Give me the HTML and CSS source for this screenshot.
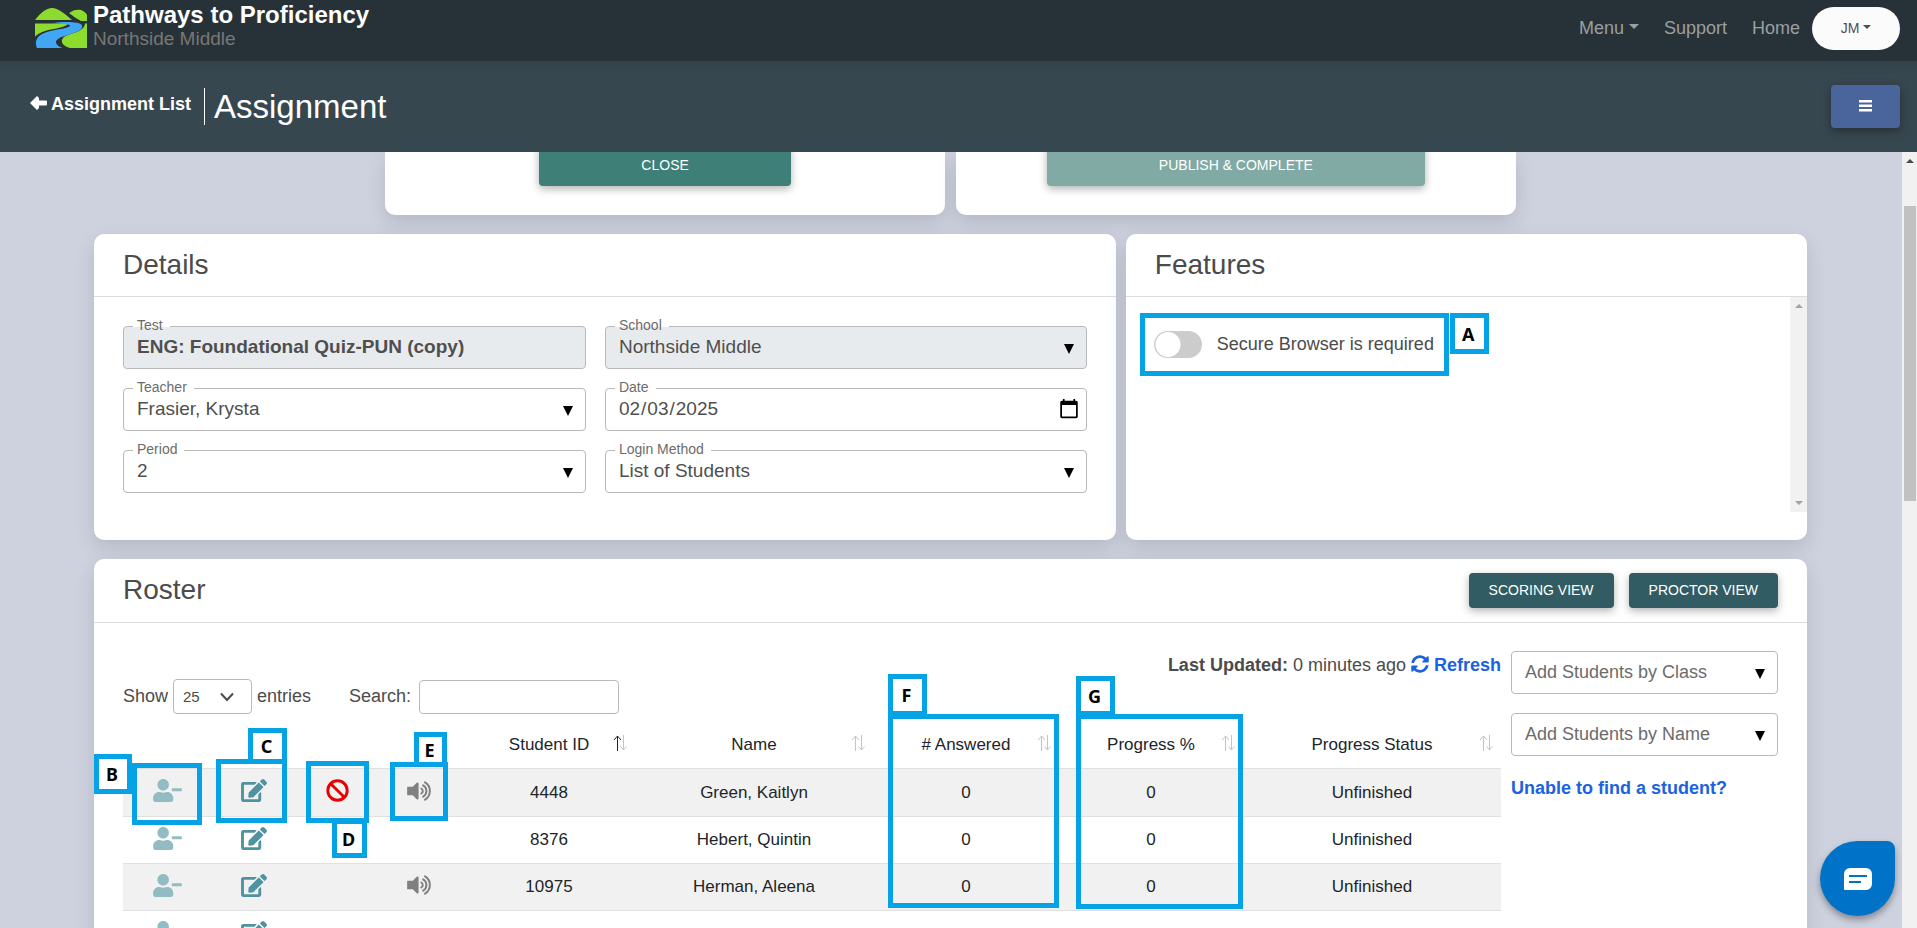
FILE: index.html
```html
<!DOCTYPE html>
<html lang="en">
<head>
<meta charset="utf-8">
<title>Assignment - Pathways to Proficiency</title>
<link rel="stylesheet" href="styles.css">
</head>
<body>
<svg class="sprite" aria-hidden="true">
  <symbol id="user-minus" viewBox="0 0 640 512"><path d="M624 208H432c-8.800 0-16 7.200-16 16v32c0 8.800 7.200 16 16 16h192c8.800 0 16-7.200 16-16v-32c0-8.800-7.200-16-16-16zm-400 48c70.700 0 128-57.300 128-128S294.700 0 224 0 96 57.300 96 128s57.300 128 128 128zm89.600 32h-16.700c-22.200 10.200-46.900 16-72.900 16s-50.600-5.800-72.900-16h-16.700C60.200 288 0 348.200 0 422.400V464c0 26.500 21.500 48 48 48h352c26.500 0 48-21.500 48-48v-41.600c0-74.200-60.200-134.400-134.400-134.400z"/></symbol>
  <symbol id="edit" viewBox="0 0 576 512"><path d="M402.600 83.200l90.200 90.200c3.800 3.800 3.800 10 0 13.800L274.400 405.600l-92.800 10.300c-12.400 1.400-22.900-9.100-21.500-21.500l10.300-92.800L388.800 83.200c3.800-3.800 10-3.800 13.800 0zm162-22.900l-48.800-48.800c-15.200-15.200-39.900-15.200-55.200 0l-35.400 35.400c-3.800 3.800-3.800 10 0 13.800l90.200 90.200c3.800 3.800 10 3.800 13.800 0l35.400-35.400c15.200-15.300 15.200-40 0-55.200zM384 346.200V448H64V128h229.800c3.200 0 6.200-1.300 8.500-3.500l40-40c7.600-7.600 2.200-20.500-8.500-20.500H48C21.500 64 0 85.500 0 112v352c0 26.500 21.500 48 48 48h352c26.500 0 48-21.500 48-48V306.200c0-10.700-12.900-16-20.500-8.500l-40 40c-2.200 2.300-3.500 5.300-3.500 8.500z"/></symbol>
  <symbol id="ban" viewBox="0 0 512 512"><g fill="none" stroke="currentColor" stroke-width="64"><circle cx="256" cy="256" r="216"/><path d="M105 105l302 302"/></g></symbol>
  <symbol id="volume" viewBox="0 0 576 448"><path d="M215 39l-89 89H12c-7 0-12 5-12 12v168c0 7 5 12 12 12h114l89 89c15 15 41 4 41-17V56c0-21-26-32-41-17z"/><g fill="none" stroke="currentColor" stroke-width="44" stroke-linecap="round"><path d="M317 168a64 64 0 0 1 0 112"/><path d="M358 97a146 146 0 0 1 0 254"/><path d="M401 30a228 228 0 0 1 0 388"/></g></symbol>
  <symbol id="sync" viewBox="0 0 512 512"><path d="M370.720 133.280C339.458 104.008 298.888 87.962 255.848 88c-77.458.068-144.328 53.178-162.791 126.850-1.344 5.363-6.122 9.150-11.651 9.150H24.103c-7.498 0-13.194-6.807-11.807-14.176C33.933 94.924 134.813 8 256 8c66.448 0 126.791 26.136 171.315 68.685L463.030 40.970C478.149 25.851 504 36.559 504 57.941V192c0 13.255-10.745 24-24 24H345.941c-21.382 0-32.090-25.851-16.971-40.971l41.750-41.749zM32 296h134.059c21.382 0 32.090 25.851 16.971 40.971l-41.750 41.750c31.262 29.273 71.835 45.319 114.876 45.280 77.418-.070 144.315-53.144 162.787-126.849 1.344-5.363 6.122-9.150 11.651-9.150h57.304c7.498 0 13.194 6.807 11.807 14.176C478.067 417.076 377.187 504 256 504c-66.448 0-126.791-26.136-171.315-68.685L48.970 471.030C33.851 486.149 8 475.441 8 454.059V320c0-13.255 10.745-24 24-24z"/></symbol>
  <symbol id="sort" viewBox="0 0 14 16"><g fill="none" stroke="currentColor"><path class="up" d="M4.500 16V1M1 5l3.500-4L8 5"/><path class="down" d="M10.500 0v15M7.500 11.500l3 3.500 3-3.500"/></g></symbol>
</svg>

<header class="topbar">
  <div class="brand">
    <svg class="logo" viewBox="0 0 52 40" aria-hidden="true">
      <path fill="#8ddb2e" d="M0 12C6 4 12 0 17 0c6 0 13 6 20 12z"/>
      <path fill="#8ddb2e" d="M34 5C38 2 42 1 46 2c3 1 5 3 6 5v6h-6C42 11 38 8 34 5z"/>
      <path fill="#8ddb2e" d="M0 15.500h30c2 0 3 1 1 2-7 4-23 3-31 11z"/>
      <path fill="#8ddb2e" d="M50 15.500h2V40H35c-7-2-10-6-7-10 5-5 21-5 22-14.500z"/>
      <path fill="#41a7f5" d="M17 15.200c10-1.500 27-2 30 2 2 6-10 8-18 11-10 3-11 8-1 12H2C-1 33 2 27 12 24c9-3 20-3 23-6 1-2-6-2-18-2.800z"/>
    </svg>
    <div class="brand-text">
      <div class="brand-name">Pathways to Proficiency</div>
      <div class="brand-school">Northside Middle</div>
    </div>
  </div>
  <nav class="nav">
    <button class="nav-item" type="button">Menu <span class="caret"></span></button>
    <a class="nav-item" href="#">Support</a>
    <a class="nav-item" href="#">Home</a>
    <button class="user" type="button">JM <span class="caret"></span></button>
  </nav>
</header>

<div class="titlebar">
  <a class="back" href="#"><svg viewBox="0 0 17 14" aria-hidden="true"><path d="M0 7L7 0l2 2v2.500h7a1 1 0 0 1 1 1v3a1 1 0 0 1-1 1H9V12l-2 2z"/></svg>Assignment List</a>
  <h1>Assignment</h1>
  <button class="menu-btn" type="button" aria-label="Page menu"><svg viewBox="0 0 13 12" aria-hidden="true"><path d="M0 0h13v2.500H0zM0 4.500h13V7H0zM0 9h13v2.500H0z"/></svg></button>
</div>

<div class="viewport">
  <main class="content">
    <div class="actions">
      <section class="card action-card"><button class="btn close" type="button">CLOSE</button></section>
      <section class="card action-card"><button class="btn publish" type="button" disabled>PUBLISH &amp; COMPLETE</button></section>
    </div>

    <div class="info">
      <section class="card">
        <div class="card-head"><h2>Details</h2></div>
        <div class="fields">
          <div class="field locked"><label for="test">Test</label><input class="strong" id="test" type="text" value="ENG: Foundational Quiz-PUN (copy)" readonly></div>
          <div class="field arrow locked"><label for="school">School</label><select id="school" disabled><option>Northside Middle</option></select></div>
          <div class="field arrow"><label for="teacher">Teacher</label><select id="teacher"><option>Frasier, Krysta</option></select></div>
          <div class="field"><label for="date">Date</label><input id="date" type="date" value="2025-02-03"></div>
          <div class="field arrow"><label for="period">Period</label><select id="period"><option>2</option></select></div>
          <div class="field arrow"><label for="login">Login Method</label><select id="login"><option>List of Students</option></select></div>
        </div>
      </section>
      <section class="card features">
        <div class="card-head"><h2>Features</h2></div>
        <div class="feature-list">
          <label class="toggle"><input type="checkbox">Secure Browser is required</label>
          <div class="bar bar-muted"><i class="up"></i><i class="down"></i></div>
        </div>
        <div class="box box-a"></div><div class="tag tag-a">A</div>
      </section>
    </div>

    <section class="card roster">
      <div class="card-head">
        <h2>Roster</h2>
        <div class="views"><button class="btn view" type="button">SCORING VIEW</button><button class="btn view" type="button">PROCTOR VIEW</button></div>
      </div>
      <div class="roster-body">
        <div class="roster-main">
          <div class="updated"><b>Last Updated:</b> 0 minutes ago <a href="#"><svg viewBox="0 0 512 512" aria-hidden="true"><use href="#sync"/></svg> Refresh</a></div>
          <div class="controls">
            <label for="size">Show</label>
            <span class="size"><select id="size"><option>25</option></select><svg viewBox="0 0 14 10" aria-hidden="true"><path d="M1 1.500l6 6.500 6-6.500" fill="none" stroke="currentColor" stroke-width="2"/></svg></span>
            <span>entries</span>
            <label class="search-label" for="search">Search:</label>
            <input class="search" id="search" type="search">
          </div>
          <table>
            <colgroup><col class="c1"><col class="c2"><col class="c3"><col class="c4"><col class="c5"><col class="c6"><col class="c7"><col class="c8"><col class="c9"></colgroup>
            <thead>
              <tr>
                <th></th><th></th><th></th><th></th>
                <th class="sorted">Student ID<svg class="sort"><use href="#sort"/></svg></th>
                <th>Name<svg class="sort"><use href="#sort"/></svg></th>
                <th># Answered<svg class="sort"><use href="#sort"/></svg></th>
                <th>Progress %<svg class="sort"><use href="#sort"/></svg></th>
                <th>Progress Status<svg class="sort"><use href="#sort"/></svg></th>
              </tr>
            </thead>
            <tbody>
              <tr>
                <td><button class="icon remove" type="button" aria-label="Remove student"><svg><use href="#user-minus"/></svg></button></td>
                <td><button class="icon edit" type="button" aria-label="Edit student"><svg><use href="#edit"/></svg></button></td>
                <td><button class="icon ban" type="button" aria-label="Block student"><svg><use href="#ban"/></svg></button></td>
                <td><button class="icon volume" type="button" aria-label="Read aloud"><svg><use href="#volume"/></svg></button></td>
                <td>4448</td><td>Green, Kaitlyn</td><td>0</td><td>0</td><td>Unfinished</td>
              </tr>
              <tr>
                <td><button class="icon remove" type="button" aria-label="Remove student"><svg><use href="#user-minus"/></svg></button></td>
                <td><button class="icon edit" type="button" aria-label="Edit student"><svg><use href="#edit"/></svg></button></td>
                <td></td><td></td>
                <td>8376</td><td>Hebert, Quintin</td><td>0</td><td>0</td><td>Unfinished</td>
              </tr>
              <tr>
                <td><button class="icon remove" type="button" aria-label="Remove student"><svg><use href="#user-minus"/></svg></button></td>
                <td><button class="icon edit" type="button" aria-label="Edit student"><svg><use href="#edit"/></svg></button></td>
                <td></td>
                <td><button class="icon volume" type="button" aria-label="Read aloud"><svg><use href="#volume"/></svg></button></td>
                <td>10975</td><td>Herman, Aleena</td><td>0</td><td>0</td><td>Unfinished</td>
              </tr>
              <tr>
                <td><button class="icon remove" type="button" aria-label="Remove student"><svg><use href="#user-minus"/></svg></button></td>
                <td><button class="icon edit" type="button" aria-label="Edit student"><svg><use href="#edit"/></svg></button></td>
                <td></td><td></td><td></td><td></td><td></td><td></td><td></td>
              </tr>
            </tbody>
          </table>
        </div>
        <aside class="add">
          <div class="field arrow"><select class="soft" aria-label="Add Students by Class"><option>Add Students by Class</option></select></div>
          <div class="field arrow"><select class="soft" aria-label="Add Students by Name"><option>Add Students by Name</option></select></div>
          <a href="#">Unable to find a student?</a>
        </aside>
      </div>
      <div class="box box-b"></div><div class="tag tag-b">B</div>
      <div class="tag tag-c">C</div><div class="box box-c"></div>
      <div class="box box-d"></div><div class="tag tag-d">D</div>
      <div class="tag tag-e">E</div><div class="box box-e"></div>
      <div class="tag tag-f">F</div><div class="box box-f"></div>
      <div class="tag tag-g">G</div><div class="box box-g"></div>
    </section>
  </main>
  <div class="bar page-bar"><i class="up"></i><span class="thumb"></span></div>
  <button class="chat" type="button" aria-label="Chat"><svg viewBox="0 0 28 22" aria-hidden="true"><path fill="#fff" d="M6 0h16a6 6 0 0 1 6 6v10a6 6 0 0 1-6 6H1a1 1 0 0 1-1-1V6a6 6 0 0 1 6-6z"/><path stroke="#0073c8" stroke-width="2" d="M5 8h18M5 14h12"/></svg></button>
</div>
</body>
</html>
```

FILE: styles.css
```css
* { box-sizing: border-box; }

body {
  margin: 0;
  height: 100vh;
  display: flex;
  flex-direction: column;
  overflow: hidden;
  font: 18px/27px "Liberation Sans", Arial, sans-serif;
  color: #4b4b4b;
  background: #ced2df;
}

button, input, select { font: inherit; color: inherit; margin: 0; }
button { border: 0; padding: 0; background: none; cursor: pointer; }
a { text-decoration: none; color: #1b62e2; font-weight: bold; }
h1, h2 { margin: 0; font-weight: normal; }
svg { fill: currentColor; }
.sprite { position: absolute; width: 0; height: 0; }

/* top bar */
.topbar {
  flex: none;
  height: 61px;
  padding: 0 17px 0 35px;
  display: flex;
  justify-content: space-between;
  background: #273238;
  box-shadow: 0 2px 12px rgba(0, 0, 0, .12);
  z-index: 1;
}
.brand { display: flex; gap: 6px; }
.brand-text { padding-top: 1px; }
.logo { width: 52px; height: 40px; margin-top: 8px; }
.brand-name { color: #fff; font-size: 24px; font-weight: bold; line-height: 28px; }
.brand-school { color: #777; font-size: 19px; line-height: 20px; }
.nav { display: flex; align-items: flex-start; gap: 25px; padding-top: 7px; }
.nav-item { color: #9b9fa1; font-weight: normal; line-height: 27px; margin-top: 8px; }
.caret {
  display: inline-block;
  border: 5px solid transparent;
  border-top-color: currentColor;
  border-bottom: 0;
  vertical-align: 5px;
}
.user {
  width: 88px;
  height: 43px;
  margin-left: -13px;
  border-radius: 22px;
  background: #fbfbfb;
  color: #4f4f4f;
  font-size: 14px;
}
.user .caret { border-width: 4px 4px 0; vertical-align: 4px; }

/* title bar */
.titlebar {
  flex: none;
  height: 91px;
  padding: 0 17px 0 30px;
  display: flex;
  align-items: center;
  background: #37474f;
  color: #fff;
}
.back { color: #fff; padding: 0 13px 5px 0; }
.back svg { width: 17px; height: 14px; margin-right: 4px; }
h1 { font-size: 33px; line-height: 37px; border-left: 1px solid #fff; padding-left: 9px; }
.menu-btn {
  width: 69px;
  height: 43px;
  margin-left: auto;
  border-radius: 4px;
  background: #4a659b;
  color: #fff;
  box-shadow: 0 3px 8px rgba(0, 0, 0, .35);
}
.menu-btn svg { width: 13px; height: 12px; }

/* scrolled page */
.viewport { flex: 1; min-height: 0; display: flex; position: relative; overflow: hidden; }
.content {
  flex: 1;
  min-width: 0;
  padding: 0 95px 0 94px;
  display: flex;
  flex-direction: column;
  gap: 19px;
}
.card {
  position: relative;
  background: #fff;
  border-radius: 10px;
  box-shadow: 0 8px 20px rgba(0, 0, 0, .12);
}
.card-head {
  height: 63px;
  padding: 0 29px;
  display: flex;
  align-items: center;
  justify-content: space-between;
  border-bottom: 1px solid #dcdcdc;
}
h2 { font-size: 28px; line-height: 34px; }

.actions {
  width: 66%;
  margin: 0 auto;
  display: grid;
  grid-template-columns: 1fr 1fr;
  gap: 11px;
}
.action-card {
  height: 63px;
  border-radius: 0 0 10px 10px;
  display: flex;
  justify-content: center;
  align-items: flex-start;
}
.btn {
  height: 42px;
  border-radius: 4px;
  color: #fff;
  font-size: 14px;
  box-shadow: 0 3px 8px rgba(0, 0, 0, .3);
}
.close, .publish { margin-top: -8px; }
.close { width: 45%; background: #3e8077; }
.publish { width: 378px; background: #81aaa5; }

.info { display: grid; grid-template-columns: 3fr 2fr; gap: 10px; }
.fields {
  padding: 29px 29px 47px;
  display: grid;
  grid-template-columns: 49fr 51fr;
  gap: 19px;
  font-size: 19px;
}
.field { position: relative; height: 43px; }
.field label {
  position: absolute;
  left: 10px;
  top: -9px;
  padding: 0 7px 0 4px;
  font-size: 14px;
  line-height: 16px;
  color: #6c6c6c;
  background: linear-gradient(#fff 10px, transparent 10px);
}
.field input, .field select {
  appearance: none;
  width: 100%;
  height: 100%;
  padding: 0 13px 2px;
  border: 1px solid #b9b9b9;
  border-radius: 4px;
  background: #fff;
  opacity: 1;
  color: #4f4f4f;
}
.locked input, .locked select { background: #e8ebee; }
.field .strong { font-weight: bold; }
.field .soft { color: #6b6b6b; padding-bottom: 0; }
.arrow::after {
  content: "";
  position: absolute;
  right: 13px;
  top: 18px;
  border: 5px solid transparent;
  border-top: 10px solid #000;
  border-bottom: 0;
}
#date { padding: 0 6px 2px 12px; }
#date::-webkit-calendar-picker-indicator { width: 22px; height: 22px; padding: 0; margin: 0; }
#date::-webkit-datetime-edit-fields-wrapper, #date::-webkit-datetime-edit { padding: 0; }

.feature-list { position: relative; height: 215px; padding: 34px 28px; }
.toggle { display: flex; align-items: center; gap: 15px; line-height: 27px; }
.toggle input {
  appearance: none;
  width: 48px;
  height: 27px;
  border-radius: 14px;
  background: radial-gradient(circle at 14px 50%, #fff 12px, #ccc 13px);
}

/* scroll tracks */
.bar { background: #f1f1f1; }
.bar i { position: absolute; left: 50%; margin-left: -4px; border: 4px solid transparent; }
.bar .up { top: 7px; border-top: 0; border-bottom-color: currentColor; }
.bar .down { bottom: 7px; border-bottom: 0; border-top-color: currentColor; }
.bar-muted { position: absolute; top: 0; right: 0; bottom: 0; width: 17px; color: #a3a3a3; }
.page-bar { position: relative; flex: none; width: 15px; padding: 54px 1px 0 2px; color: #4b4b4b; }
.thumb { display: block; height: 295px; background: #c1c1c1; }

/* roster */
.roster { flex: 1 0 auto; border-radius: 10px 10px 0 0; }
.roster .card-head { height: 64px; padding-bottom: 1px; }
.views { display: flex; gap: 15px; }
.view { height: 35px; padding: 0 20px; background: #315c63; }
.roster-body { padding: 28px 29px 0; display: grid; grid-template-columns: 1fr 267px; gap: 10px; }
.updated { text-align: right; line-height: 28px; }
.updated svg { width: 18px; height: 18px; vertical-align: -2px; }
.controls { display: flex; align-items: center; gap: 5px; height: 35px; line-height: 25px; }
.controls label, .controls > span { padding-bottom: 1px; }
.size { position: relative; display: flex; }
.size select {
  appearance: none;
  width: 79px;
  height: 35px;
  padding: 0 9px;
  border: 1px solid #b9b9b9;
  border-radius: 4px;
  background: #fff;
  font-size: 15px;
}
.size svg { position: absolute; right: 18px; top: 13px; width: 14px; height: 10px; }
.search-label { margin: 0 3px 0 33px; }
.search {
  appearance: none;
  width: 200px;
  height: 34px;
  border: 1px solid #b9b9b9;
  border-radius: 4px;
}
table { width: 100%; margin-top: 7px; border-collapse: collapse; table-layout: fixed; font-size: 17px; color: #212529; }
th, td { height: 47px; padding: 0; text-align: center; font-weight: normal; border-bottom: 1px solid #dee0e2; }
th { position: relative; }
tbody tr:nth-child(odd) { background: #f1f1f1; }
tbody tr:first-child td { height: 48px; }
.c1 { width: 88px; }
.c2 { width: 86px; }
.c3 { width: 80px; }
.c4 { width: 86px; }
.c5 { width: 172px; }
.c6 { width: 238px; }
.c7 { width: 186px; }
.c8 { width: 184px; }
.c9 { width: 258px; }
.sort { position: absolute; right: 8px; top: 14px; width: 14px; height: 16px; color: #c4c4c4; }
.sorted .sort { --up: #212529; }
.up { stroke: var(--up, currentColor); }
.icon { display: block; margin: 0 auto; }
.icon svg { display: block; width: 29px; height: 23px; margin-bottom: 3px; }
.remove { color: #92bcc3; }
.edit { color: #4f93a0; }
.icon.edit svg { width: 26px; }
.ban { color: #e90000; }
.icon.ban svg { width: 23px; }
.volume { color: #808080; }
.icon.volume svg { width: 26px; height: 20px; }
.add { display: flex; flex-direction: column; gap: 19px; }

/* callouts */
.box, .tag { position: absolute; border: 5px solid #05a3e6; }
.box { pointer-events: none; }
.tag {
  display: grid;
  place-items: center;
  padding-right: 2px;
  background: #fff;
  color: #000;
  font: bold 18px/20px "Noto Sans", sans-serif;
}
.box-a { left: 14px; top: 79px; width: 309px; height: 63px; }
.tag-a { left: 324px; top: 79px; width: 39px; height: 41px; }
.box-b { left: 38px; top: 204px; width: 70px; height: 62px; }
.tag-b { left: 0; top: 195px; width: 38px; height: 40px; }
.box-c { left: 122px; top: 200px; width: 71px; height: 64px; }
.tag-c { left: 154px; top: 169px; width: 39px; height: 36px; }
.box-d { left: 212px; top: 202px; width: 63px; height: 62px; }
.tag-d { left: 238px; top: 260px; width: 35px; height: 39px; }
.box-e { left: 296px; top: 203px; width: 58px; height: 59px; }
.tag-e { left: 320px; top: 173px; width: 33px; height: 35px; }
.box-f { left: 794px; top: 155px; width: 171px; height: 194px; }
.tag-f { left: 794px; top: 115px; width: 39px; height: 42px; }
.box-g { left: 982px; top: 155px; width: 167px; height: 195px; }
.tag-g { left: 982px; top: 117px; width: 39px; height: 40px; }

.chat {
  position: absolute;
  right: 22px;
  bottom: 12px;
  width: 75px;
  height: 75px;
  border-radius: 50% 8px 50% 50%;
  background: #0073c8;
  box-shadow: 0 4px 7px rgba(0, 0, 0, .35);
}
.chat svg { width: 28px; height: 22px; display: block; margin: 0 auto; }
```
